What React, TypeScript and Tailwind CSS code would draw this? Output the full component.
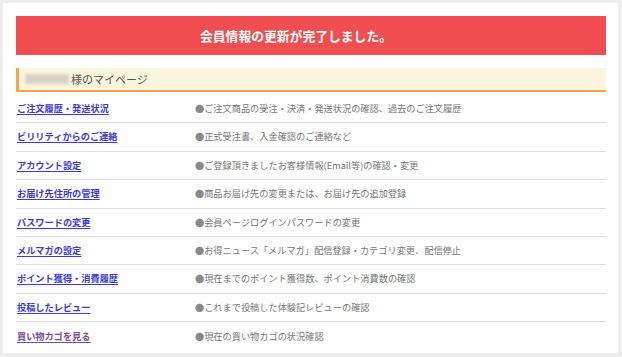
const rows = [
  { label: 'ご注文履歴・発送状況', desc: 'ご注文商品の受注・決済・発送状況の確認、過去のご注文履歴' },
  { label: 'ビリリティからのご連絡', desc: '正式受注書、入金確認のご連絡など' },
  { label: 'アカウント設定', desc: 'ご登録頂きましたお客様情報(Email等)の確認・変更' },
  { label: 'お届け先住所の管理', desc: '商品お届け先の変更または、お届け先の追加登録' },
  { label: 'パスワードの変更', desc: '会員ページログインパスワードの変更' },
  { label: 'メルマガの設定', desc: 'お得ニュース「メルマガ」配信登録・カテゴリ変更、配信停止' },
  { label: 'ポイント獲得・消費履歴', desc: '現在までのポイント獲得数、ポイント消費数の確認' },
  { label: '投稿したレビュー', desc: 'これまで投稿した体験記レビューの確認' },
  { label: '買い物カゴを見る', desc: '現在の買い物カゴの状況確認', visited: true },
]

export default function App() {
  return (
    <div
      className="w-[622px] h-[357px] bg-[#ededed] pl-[3px] pr-[4px] pt-[3px] pb-[4px]"
      style={{ fontFamily: '"Noto Sans CJK JP", "Noto Sans", sans-serif' }}
    >
      <div className="h-full bg-white pl-[13px] pr-[12px] pt-[13px]">
        <div className="h-[39px] bg-[#f04e50] flex items-center justify-center pr-[30px]">
          <p className="text-white font-bold text-[12.8px]">会員情報の更新が完了しました。</p>
        </div>

        <div className="mt-[13px] h-[24px] bg-[#faf5dc] border-l-[3px] border-b-2 border-[#f9a24c] flex items-center pl-[6px]">
          <span className="inline-block w-[44px] h-[10px] bg-[#d6d3c6] blur-[1.5px] mr-[2px]" />
          <span className="text-[11px] text-[#555555]">様のマイページ</span>
        </div>

        <div className="mt-[3px]">
          {rows.map((row, i) => (
            <div
              key={row.label}
              className={`h-[28.4px] flex items-center leading-none ${i < rows.length - 1 ? 'border-b border-[#dddddd]' : ''}`}
            >
              <div className="w-[179px] pl-[1px] flex items-center">
                <a
                  href="#"
                  className={`block text-[9.2px] leading-none font-semibold underline underline-offset-2 ${row.visited ? 'text-[#7d4aa0]' : 'text-[#3a3ae0]'}`}
                >
                  {row.label}
                </a>
              </div>
              <p className="text-[9.2px] leading-none text-[#777777]">
                <span className="text-[#888888]">●</span>
                {row.desc}
              </p>
            </div>
          ))}
        </div>
      </div>
    </div>
  )
}
